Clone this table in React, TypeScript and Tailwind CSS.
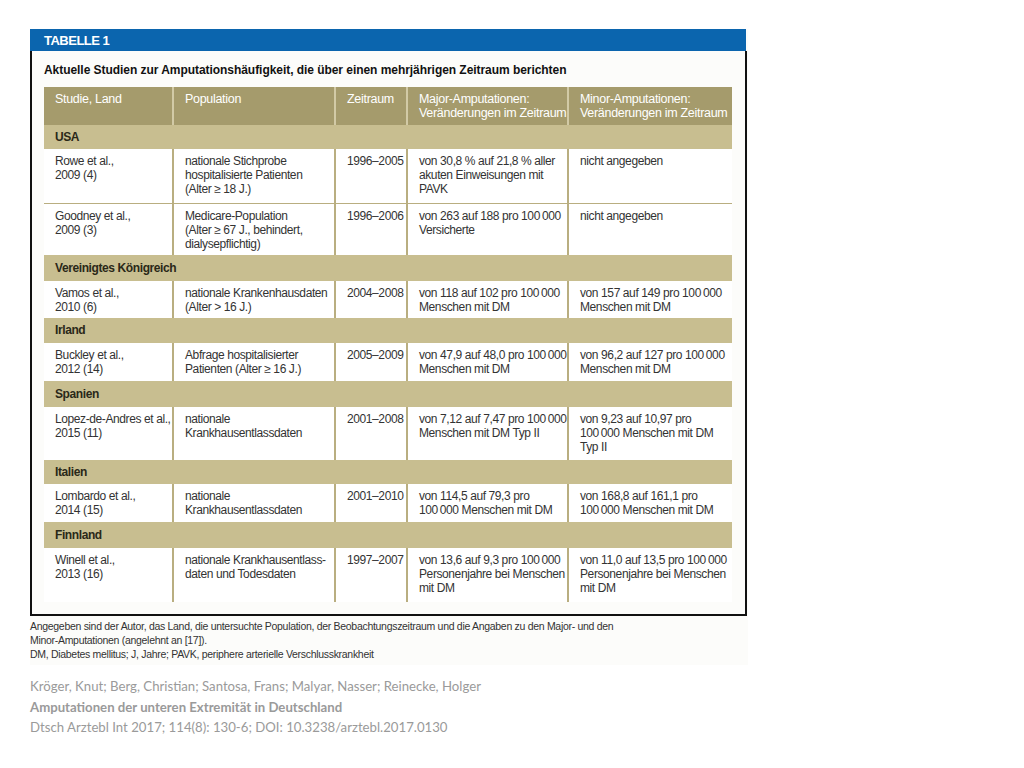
import React from "react";

const SANS = "'Liberation Sans', Arial, sans-serif";
const T = "\u2009";

type Row =
  | { kind: "group"; label: string; h: string; pt: string }
  | { kind: "data"; cells: string[][]; h: string; sep?: boolean };

const rows: Row[] = [
  { kind: "group", label: "USA", h: "h-[24px]", pt: "pt-[5px]" },
  {
    kind: "data",
    h: "h-[54px]",
    cells: [
      ["Rowe et al.,", "2009 (4)"],
      ["nationale Stichprobe", "hospitalisierte Patienten", "(Alter ≥ 18 J.)"],
      ["1996–2005"],
      ["von 30,8 % auf 21,8 % aller", "akuten Einweisungen mit", "PAVK"],
      ["nicht angegeben"],
    ],
  },
  {
    kind: "data",
    h: "h-[52px]",
    sep: true,
    cells: [
      ["Goodney et al.,", "2009 (3)"],
      ["Medicare-Population", "(Alter ≥ 67 J., behindert,", "dialysepflichtig)"],
      ["1996–2006"],
      [`von 263 auf 188 pro 100${T}000`, "Versicherte"],
      ["nicht angegeben"],
    ],
  },
  { kind: "group", label: "Vereinigtes Königreich", h: "h-[26px]", pt: "pt-[6px]" },
  {
    kind: "data",
    h: "h-[37px]",
    cells: [
      ["Vamos et al.,", "2010 (6)"],
      ["nationale Krankenhausdaten", "(Alter > 16 J.)"],
      ["2004–2008"],
      [`von 118 auf 102 pro 100${T}000`, "Menschen mit DM"],
      [`von 157 auf 149 pro 100${T}000`, "Menschen mit DM"],
    ],
  },
  { kind: "group", label: "Irland", h: "h-[25px]", pt: "pt-[5px]" },
  {
    kind: "data",
    h: "h-[38px]",
    cells: [
      ["Buckley et al.,", "2012 (14)"],
      ["Abfrage hospitalisierter", "Patienten (Alter ≥ 16 J.)"],
      ["2005–2009"],
      [`von 47,9 auf 48,0 pro 100${T}000`, "Menschen mit DM"],
      [`von 96,2 auf 127 pro 100${T}000`, "Menschen mit DM"],
    ],
  },
  { kind: "group", label: "Spanien", h: "h-[26px]", pt: "pt-[6px]" },
  {
    kind: "data",
    h: "h-[53px]",
    cells: [
      ["Lopez-de-Andres et al.,", "2015 (11)"],
      ["nationale", "Krankhausentlassdaten"],
      ["2001–2008"],
      [`von 7,12 auf 7,47 pro 100${T}000`, "Menschen mit DM Typ II"],
      ["von 9,23 auf 10,97 pro", `100${T}000 Menschen mit DM`, "Typ II"],
    ],
  },
  { kind: "group", label: "Italien", h: "h-[24px]", pt: "pt-[5px]" },
  {
    kind: "data",
    h: "h-[38px]",
    cells: [
      ["Lombardo et al.,", "2014 (15)"],
      ["nationale", "Krankhausentlassdaten"],
      ["2001–2010"],
      ["von 114,5 auf 79,3 pro", `100${T}000 Menschen mit DM`],
      ["von 168,8 auf 161,1 pro", `100${T}000 Menschen mit DM`],
    ],
  },
  { kind: "group", label: "Finnland", h: "h-[26px]", pt: "pt-[6px]" },
  {
    kind: "data",
    h: "h-[54px]",
    cells: [
      ["Winell et al.,", "2013 (16)"],
      ["nationale Krankhausentlass-", "daten und Todesdaten"],
      ["1997–2007"],
      [`von 13,6 auf 9,3 pro 100${T}000`, "Personenjahre bei Menschen", "mit DM"],
      [`von 11,0 auf 13,5 pro 100${T}000`, "Personenjahre bei Menschen", "mit DM"],
    ],
  },
];

export default function App() {
  return (
    <div className="w-[1024px] h-[768px] bg-white pl-[30px] pt-[29px]">
      <div className="w-[718px] h-[636px] bg-[#fcfcfa] flex flex-col">
        {/* Blue band */}
        <div className="h-[22px] w-[716px] bg-[#0b65ae] pl-[14px] flex items-center">
          <span
            className="text-white font-bold text-[13px] tracking-[-0.5px] leading-none"
            style={{ fontFamily: SANS }}
          >
            TABELLE 1
          </span>
        </div>
        {/* Bordered box */}
        <div
          className="w-[717px] h-[565px] border-2 border-t-0 border-[#111] pl-[12px] pt-[12px]"
          style={{ fontFamily: SANS }}
        >
          <div className="text-[12px] tracking-[-0.05px] leading-[14px] font-bold text-[#111]">
            Aktuelle Studien zur Amputationshäufigkeit, die über einen mehrjährigen Zeitraum berichten
          </div>
          <div className="mt-[10px] w-[688px] grid grid-cols-[130px_162px_72px_161px_163px] text-[12px] tracking-[-0.4px] leading-[14px] text-[#333]">
            {/* header */}
            {[
              ["Studie, Land"],
              ["Population"],
              ["Zeitraum"],
              ["Major-Amputationen:", "Veränderungen im Zeitraum"],
              ["Minor-Amputationen:", "Veränderungen im Zeitraum"],
            ].map((c, i) => (
              <div
                key={"h" + i}
                className={
                  "bg-[#a59b6c] text-white text-[12.5px] tracking-[-0.3px] h-[38px] pt-[5px] pl-[11px] " +
                  (i < 4 ? "border-r-2 border-[#d2caa6]" : "")
                }
              >
                {c.map((l, j) => (
                  <div key={j} className="whitespace-nowrap">
                    {l}
                  </div>
                ))}
              </div>
            ))}
            {rows.map((r, ri) => {
              if (r.kind === "group") {
                return (
                  <div
                    key={ri}
                    className={
                      "col-span-5 bg-[#c8be90] pl-[11px] font-bold text-[#2a2818] text-[12px] tracking-[-0.4px] " +
                      r.h +
                      " " +
                      r.pt
                    }
                  >
                    {r.label}
                  </div>
                );
              }
              return r.cells.map((c, ci) => (
                <div
                  key={ri + "-" + ci}
                  className={
                    "bg-white pl-[11px] pt-[5px] " +
                    r.h +
                    " " +
                    (ci < 4 ? "border-r-2 border-[#b9ae80] " : "") +
                    (r.sep ? "border-t border-t-[#b9ae80]" : "")
                  }
                >
                  {c.map((l, j) => (
                    <div key={j} className="whitespace-nowrap">
                      {l}
                    </div>
                  ))}
                </div>
              ));
            })}
          </div>
        </div>
        {/* Footnote */}
        <div
          className="mt-[3px] text-[10.5px] tracking-[-0.3px] leading-[14px] text-[#333]"
          style={{ fontFamily: SANS }}
        >
          <div>
            Angegeben sind der Autor, das Land, die untersuchte Population, der Beobachtungszeitraum und die Angaben zu den Major- und den
          </div>
          <div>Minor-Amputationen (angelehnt an [17]).</div>
          <div>DM, Diabetes mellitus; J, Jahre; PAVK, periphere arterielle Verschlusskrankheit</div>
        </div>
      </div>
      {/* Citation */}
      <div
        className="mt-[11px] text-[13.2px] leading-[20.5px] text-[#9a9a9a]"
        style={{ fontFamily: "Lato, 'Open Sans', sans-serif" }}
      >
        <div>Kröger, Knut; Berg, Christian; Santosa, Frans; Malyar, Nasser; Reinecke, Holger</div>
        <div className="font-bold">Amputationen der unteren Extremität in Deutschland</div>
        <div>Dtsch Arztebl Int 2017; 114(8): 130-6; DOI: 10.3238/arztebl.2017.0130</div>
      </div>
    </div>
  );
}
